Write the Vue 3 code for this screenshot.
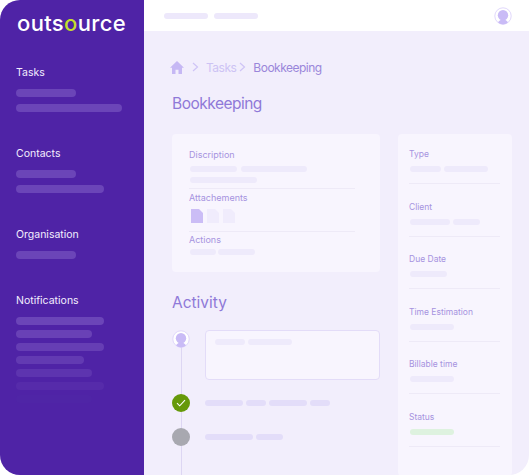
<script setup>
const sections = [
  { title: 'Tasks', bars: [[60, 1], [106, 1]] },
  { title: 'Contacts', bars: [[60, 1], [88, 1]] },
  { title: 'Organisation', bars: [[60, 1]] },
  {
    title: 'Notifications',
    tight: true,
    bars: [[88, 1], [76, 0.9], [88, 0.8], [68, 0.7], [76, 0.5], [88, 0.25], [76, 0.05]]
  }
]
const fields = [
  { label: 'Type', bars: [31, 44] },
  { label: 'Client', bars: [40, 27] },
  { label: 'Due Date', bars: [37] },
  { label: 'Time Estimation', bars: [44] },
  { label: 'Billable time', bars: [44] },
  { label: 'Status', bars: [44], green: true }
]
</script>

<template>
  <div class="frame">
    <aside class="sidebar">
      <div class="logo">outs<span class="logo-o">o</span>urce</div>
      <section v-for="s in sections" :key="s.title" class="side-section" :class="{ tight: s.tight }">
        <h3 class="side-title">{{ s.title }}</h3>
        <div
          v-for="(b, i) in s.bars"
          :key="i"
          class="side-bar"
          :style="{ width: b[0] + 'px', opacity: b[1] }"
        ></div>
      </section>
    </aside>

    <div class="main">
      <header class="topbar">
        <span class="top-pill"></span>
        <span class="top-pill"></span>
        <span class="avatar top-avatar">
          <svg viewBox="0 0 18 18" width="18" height="18">
            <circle cx="9" cy="9" r="8.2" fill="#fff" stroke="#DCD2FA" stroke-width="0.9" />
            <circle cx="9" cy="8.2" r="5.2" fill="#C9BBF6" />
            <path d="M4.2 15.8c.8-2.2 2.6-3.3 4.8-3.3s4 1.1 4.8 3.3a8.2 8.2 0 0 1-9.6 0z" fill="#C9BBF6" />
          </svg>
        </span>
      </header>

      <div class="content">
        <nav class="crumbs">
          <svg class="home" viewBox="0 0 16 14" width="14" height="13" preserveAspectRatio="none">
            <path d="M8 0 16 7.2h-2.3V14H9.7V9.5H6.3V14H2.3V7.2H0z" fill="#C6B8F4" />
          </svg>
          <svg class="chev" viewBox="0 0 7 10" width="7" height="10">
            <path d="M1 1l4.5 4L1 9" fill="none" stroke="#CFC4F6" stroke-width="1.2" />
          </svg>
          <span class="crumb-muted">Tasks</span>
          <svg class="chev" viewBox="0 0 7 10" width="7" height="10">
            <path d="M1 1l4.5 4L1 9" fill="none" stroke="#CFC4F6" stroke-width="1.2" />
          </svg>
          <span class="crumb-current">Bookkeeping</span>
        </nav>

        <h1 class="title">Bookkeeping</h1>

        <div class="columns">
          <div class="left">
            <div class="card details">
              <div class="label">Discription</div>
              <div class="pills first-pills">
                <span class="pill" style="width: 47px"></span>
                <span class="pill" style="width: 66px"></span>
              </div>
              <div class="pills second-pills">
                <span class="pill" style="width: 67px"></span>
              </div>
              <div class="rule"></div>
              <div class="label attach-label">Attachements</div>
              <div class="docs">
                <svg v-for="n in 3" :key="n" viewBox="0 0 12 14" width="12" height="14">
                  <path d="M0 0h8l4 4v10H0z" :fill="n === 1 ? '#CBBDF6' : '#F0ECFC'" />
                </svg>
              </div>
              <div class="rule"></div>
              <div class="label action-label">Actions</div>
              <div class="pills action-pills">
                <span class="pill" style="width: 26px"></span>
                <span class="pill" style="width: 37px"></span>
              </div>
            </div>

            <h2 class="activity-title">Activity</h2>

            <div class="timeline">
              <span class="line"></span>
              <div class="event event-box">
                <span class="avatar">
                  <svg viewBox="0 0 18 18" width="18" height="18">
                    <circle cx="9" cy="9" r="8.2" fill="#fff" stroke="#DCD2FA" stroke-width="0.9" />
                    <circle cx="9" cy="8.2" r="5.2" fill="#C9BBF6" />
                    <path d="M4.2 15.8c.8-2.2 2.6-3.3 4.8-3.3s4 1.1 4.8 3.3a8.2 8.2 0 0 1-9.6 0z" fill="#C9BBF6" />
                  </svg>
                </span>
                <div class="comment">
                  <span class="pill" style="width: 30px"></span>
                  <span class="pill" style="width: 44px"></span>
                </div>
              </div>
              <div class="event event-check">
                <span class="dot green">
                  <svg viewBox="0 0 10 8" width="10" height="8">
                    <path d="M1 4.2 3.7 6.8 9 1.2" fill="none" stroke="#fff" stroke-width="1.1" />
                  </svg>
                </span>
                <div class="activity-pills">
                  <span class="pill dark" style="width: 38px"></span>
                  <span class="pill dark" style="width: 20px"></span>
                  <span class="pill dark" style="width: 38px"></span>
                  <span class="pill dark" style="width: 20px"></span>
                </div>
              </div>
              <div class="event event-grey">
                <span class="dot grey"></span>
                <div class="activity-pills">
                  <span class="pill dark" style="width: 48px"></span>
                  <span class="pill dark" style="width: 27px"></span>
                </div>
              </div>
            </div>
          </div>

          <div class="card side-card">
            <div v-for="f in fields" :key="f.label" class="field">
              <div class="label">{{ f.label }}</div>
              <div class="pills field-pills">
                <span
                  v-for="(w, i) in f.bars"
                  :key="i"
                  class="pill"
                  :class="{ 'pill-green': f.green }"
                  :style="{ width: w + 'px' }"
                ></span>
              </div>
              <div class="rule field-rule"></div>
            </div>
          </div>
        </div>
      </div>
    </div>
  </div>
</template>

<style>
html, body { margin: 0; background: #fff; }
</style>

<style scoped>
.frame {
  display: flex;
  width: 529px;
  height: 475px;
  overflow: hidden;
  background: #F2EEFC;
  border-radius: 20px 0 20px 20px;
  font-family: Inter, "Liberation Sans", sans-serif;
}

/* sidebar */
.sidebar {
  width: 144px;
  flex: none;
  box-sizing: border-box;
  padding: 7px 0 0 16px;
  background: #4F23A6;
  color: #fff;
}
.logo {
  height: 32px;
  margin: 0 0 26px 1px;
  font-size: 22px;
  line-height: 32px;
  font-weight: 500;
  letter-spacing: 0.35px;
  color: #fff;
}
.logo-o { color: #C3DE2C; }
.side-section {
  display: flex;
  flex-direction: column;
  gap: 6.5px;
  margin-bottom: 34.5px;
}
.side-section:nth-of-type(3) { margin-bottom: 33.5px; }
.side-section.tight { gap: 5px; }
.side-title {
  margin: 1px 0 2.5px;
  font-size: 10.5px;
  line-height: 14px;
  font-weight: 400;
  color: #F3EEFE;
}
.side-section.tight .side-title { margin-bottom: 4px; }
.side-bar {
  height: 8px;
  border-radius: 4px;
  background: #6B45B8;
}

/* main */
.main {
  flex: 1;
  min-width: 0;
  display: flex;
  flex-direction: column;
}
.topbar {
  height: 31px;
  flex: none;
  display: flex;
  align-items: center;
  gap: 6px;
  padding: 0 17px 0 20px;
  background: #fff;
}
.top-pill {
  width: 44px;
  height: 6px;
  border-radius: 3px;
  background: #EDE8FB;
}
.avatar { display: flex; width: 18px; height: 18px; flex: none; background: transparent; }
.top-avatar { margin-left: auto; }

.content {
  flex: 1;
  min-height: 0;
  padding: 0 17px 0 28px;
}
.crumbs {
  display: flex;
  align-items: center;
  height: 16px;
  margin-top: 28px;
  font-size: 12px;
  letter-spacing: -0.5px;
}
.home { margin-left: -2px; margin-right: 8px; }
.chev { margin-right: 7px; }
.crumb-muted { color: #CDC3F4; margin-right: 3px; }
.crumb-current { color: #9A86DA; }
.title {
  margin: 19px 0 0;
  font-size: 15.5px;
  line-height: 20px;
  font-weight: 400;
  letter-spacing: -0.5px;
  color: #8F79D8;
}
.columns {
  display: flex;
  gap: 18px;
  margin-top: 20px;
}
.left { width: 208px; flex: none; }
.card {
  background: #F8F5FE;
  border-radius: 4px;
}
.details {
  height: 138px;
  box-sizing: border-box;
  padding: 15px 25px 0 17px;
}
.details .label { font-size: 9px; }
.details .pills, .details .docs { padding-left: 1px; }
.label {
  font-size: 8.5px;
  line-height: 12px;
  color: #A693E0;
}
.pills { display: flex; gap: 4px; }
.pill {
  display: block;
  height: 6px;
  border-radius: 3px;
  background: #EEEAFB;
}
.pill.dark { background: #E3DDF9; }
.pill-green { background: #DEF2DF; }
.first-pills { margin-top: 5px; }
.second-pills { margin-top: 5px; }
.rule { height: 1px; background: #EEEAF7; }
.details .rule { margin-top: 5px; }
.attach-label { margin-top: 3px; }
.docs { display: flex; gap: 4px; margin: 5px 0 0 1px; }
.docs + .rule { margin-top: 8px; }
.action-label { margin-top: 2px; }
.action-pills { margin-top: 3px; gap: 2px; }

.activity-title {
  margin: 21px 0 0;
  font-size: 15.5px;
  line-height: 20px;
  font-weight: 400;
  color: #8F79D8;
}
.timeline {
  position: relative;
  margin-top: 17px;
}
.line {
  position: absolute;
  left: 9px;
  top: 9px;
  width: 1px;
  height: 140px;
  background: #DDD6F3;
}
.event {
  position: relative;
  display: flex;
  gap: 15px;
}
.event-box { height: 50px; }
.comment {
  box-sizing: border-box;
  width: 175px;
  height: 50px;
  display: flex;
  gap: 3px;
  padding: 8px 9px;
  border: 1px solid #E3DCF8;
  border-radius: 4px;
  background: #F8F5FE;
}
.event-check { margin-top: 14px; align-items: center; height: 18px; }
.event-grey { margin-top: 16px; align-items: center; height: 18px; }
.dot {
  width: 18px;
  height: 18px;
  flex: none;
  border-radius: 50%;
  display: flex;
  align-items: center;
  justify-content: center;
}
.green { background: #66990A; }
.grey { background: #A8A8B0; }
.activity-pills { display: flex; gap: 3px; }

.side-card {
  width: 114px;
  flex: none;
  height: 342px;
  box-sizing: border-box;
  padding: 14px 12px 0 11px;
}
.field { height: 52.5px; }
.field-pills { margin-top: 6px; padding-left: 1px; gap: 3px; }
.field-rule { margin-top: 11px; }
</style>
